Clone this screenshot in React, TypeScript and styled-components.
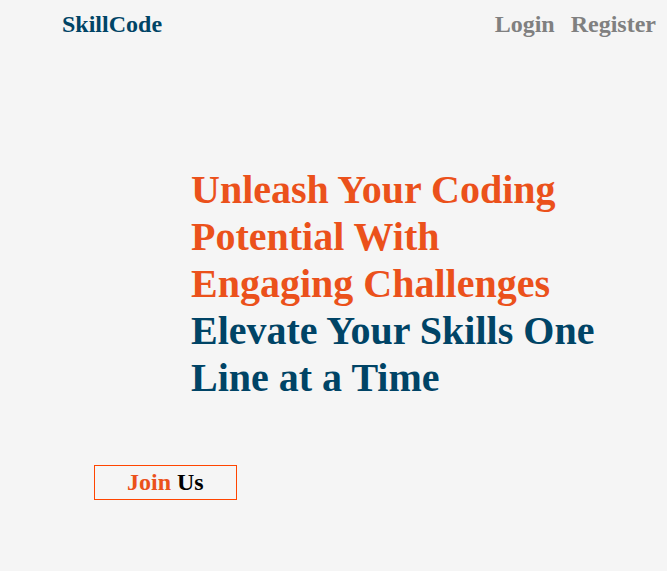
import React from "react";
import styled, { createGlobalStyle } from "styled-components";

const GlobalStyle = createGlobalStyle`
  * { box-sizing: border-box; }
  body {
    margin: 0;
    background: #f5f5f5;
    font-family: "Liberation Serif", "Times New Roman", serif;
  }
`;

const Header = styled.header`
  display: flex;
  justify-content: space-between;
  align-items: center;
  padding: 10px 11px 0 62px;
  font-size: 24px;
  line-height: 28px;
  font-weight: bold;
`;

const Brand = styled.a`
  color: #004466;
  text-decoration: none;
`;

const Nav = styled.nav`
  display: flex;
  gap: 16px;
`;

const NavLink = styled.a`
  color: #808080;
  text-decoration: none;
`;

const Hero = styled.main`
  padding: 128px 60px 0 94px;
`;

const Title = styled.h1`
  margin: 0 0 0 97px;
  max-width: 410px;
  font-size: 40px;
  line-height: 47px;
  color: #004466;
`;

const Accent = styled.span<{ $block?: boolean }>`
  display: ${(p) => (p.$block ? "block" : "inline")};
  color: #eb511b;
`;

const JoinButton = styled.button`
  margin-top: 64px;
  padding: 3px 32px;
  border: 1px solid #ff4500;
  background: transparent;
  color: #000;
  font: bold 24px/27px "Liberation Serif", "Times New Roman", serif;
  cursor: pointer;
`;

export default function App() {
  return (
    <>
      <GlobalStyle />
      <Header>
        <Brand href="#">SkillCode</Brand>
        <Nav>
          <NavLink href="#login">Login</NavLink>
          <NavLink href="#register">Register</NavLink>
        </Nav>
      </Header>
      <Hero>
        <Title>
          <Accent $block>Unleash Your Coding Potential With Engaging Challenges</Accent>
          Elevate Your Skills One Line at a Time
        </Title>
        <JoinButton type="button">
          <Accent>Join</Accent> Us
        </JoinButton>
      </Hero>
    </>
  );
}
